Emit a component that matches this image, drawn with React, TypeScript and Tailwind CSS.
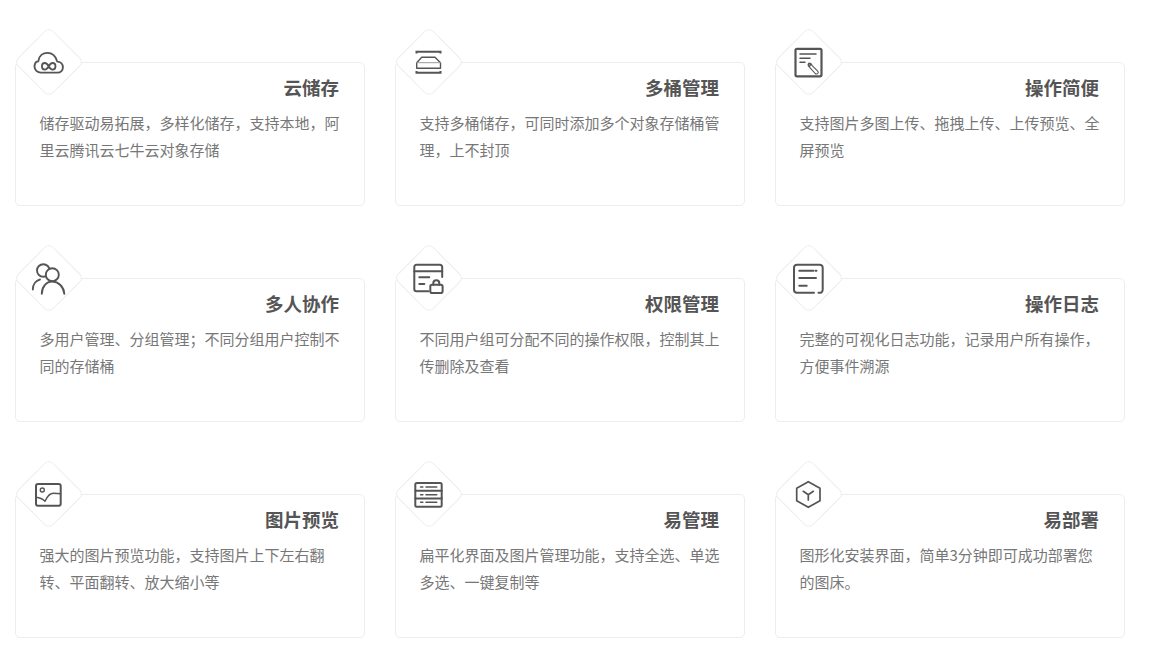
import React from 'react';

const features = [
  {
    title: '云储存',
    desc: '储存驱动易拓展，多样化储存，支持本地，阿里云腾讯云七牛云对象存储',
    icon: (
      <>
        <path d="M10 28.600h16.500c3.200 0 5.400-2.400 5.400-5.400 0-3-2.200-5.300-5-5.600-.5-.1-.8-.3-1-.8-1.400-4.600-4.600-7.900-9.400-7.900-4.700 0-8.300 3.200-9 7.700-.1.500-.3.700-.8.900C4.800 17.300 3.500 20 3.500 22.600c0 3.400 2.900 6 6.500 6z" strokeWidth="1.900" />
        <path d="M17.700 22.300c-1.200-2.200-2.400-3.300-3.800-3.300-1.700 0-3 1.500-3 3.300s1.300 3.300 3 3.300c1.400 0 2.600-1.100 3.800-3.300zm0 0c1.200 2.200 2.400 3.300 3.800 3.300 1.700 0 3-1.500 3-3.300s-1.300-3.300-3-3.300c-1.400 0-2.600 1.100-3.800 3.300z" strokeWidth="1.800" />
      </>
    ),
  },
  {
    title: '多桶管理',
    desc: '支持多桶储存，可同时添加多个对象存储桶管理，上不封顶',
    icon: (
      <>
        <path d="M5.500 9.500V7.700h24v1.800" strokeWidth="2" strokeLinecap="butt" strokeLinejoin="miter" />
        <path d="M5.500 27v1.800h24V27" strokeWidth="2" strokeLinecap="butt" strokeLinejoin="miter" />
        <path d="M5.700 18.700l5-5.400H24l5.500 5.400v5.600H5.700z" strokeWidth="1.400" />
        <path d="M5.700 18.700h23.800" strokeWidth="1" stroke="#999999" />
      </>
    ),
  },
  {
    title: '操作简便',
    desc: '支持图片多图上传、拖拽上传、上传预览、全屏预览',
    icon: (
      <>
        <rect x="4.500" y="4.800" width="26" height="27.500" rx="1.500" strokeWidth="2.200" />
        <path d="M9 10h16M9 14.300h10M9 18.300h5" strokeWidth="1.500" />
        <path d="M17.500 19.500c-.8 1.500-.3 3 1.200 3.800l5.500 6.200c.7.700 2 .7 2.600 0 .6-.7.600-1.700-.1-2.400l-5.800-5.700c-.3-1.500-1.600-2.300-3-2.300l1.600 1.800-.6 1.200-1.400-.6z" strokeWidth="1.100" />
      </>
    ),
  },
  {
    title: '多人协作',
    desc: '多用户管理、分组管理；不同分组用户控制不同的存储桶',
    icon: (
      <>
        <circle cx="12.300" cy="10.500" r="6.300" strokeWidth="1.900" />
        <circle cx="21.300" cy="14.700" r="6.500" strokeWidth="1.900" fill="#ffffff" />
        <path d="M1.800 29.500c0-5 3-9 7.200-10" strokeWidth="1.900" />
        <path d="M10.800 33.800c0-7 4.500-12.300 10.500-12.300s11.500 5.300 12 12.300" strokeWidth="1.900" />
      </>
    ),
  },
  {
    title: '权限管理',
    desc: '不同用户组可分配不同的操作权限，控制其上传删除及查看',
    icon: (
      <>
        <path d="M17.500 31.300H5.500a2.200 2.200 0 0 1-2.200-2.200V7a2.200 2.200 0 0 1 2.200-2.200h23.500A2.200 2.200 0 0 1 31.200 7v10" strokeWidth="2" />
        <path d="M3.300 11.300h27.900M8.300 17.300h10M8.300 24h5" strokeWidth="2" />
        <rect x="19.300" y="24.700" width="12.300" height="8.300" rx="1.800" strokeWidth="2" />
        <path d="M22.300 24.700v-1.500a3 3 0 0 1 6 0v1.500" strokeWidth="2" />
      </>
    ),
  },
  {
    title: '操作日志',
    desc: '完整的可视化日志功能，记录用户所有操作，方便事件溯源',
    icon: (
      <>
        <path d="M23 32.800H6a3 3 0 0 1-3-3V7.700a3 3 0 0 1 3-3h22.700a3 3 0 0 1 3 3v22.100a3 3 0 0 1-3 3h-1.200" strokeWidth="2" />
        <path d="M8.300 10.700h14M24.500 10.700h1M8.300 18h16.700M8.300 25.700h7.400" strokeWidth="2" />
      </>
    ),
  },
  {
    title: '图片预览',
    desc: '强大的图片预览功能，支持图片上下左右翻转、平面翻转、放大缩小等',
    icon: (
      <>
        <rect x="5" y="8" width="24.700" height="21.700" rx="2" strokeWidth="2" />
        <circle cx="11.300" cy="14" r="2" strokeWidth="1.400" />
        <path d="M5 21.300c3.500.3 6.500 1.500 9 4 2-4.500 4.500-8 8.500-8 2.500 0 5 .1 7.200.4" strokeWidth="1.500" />
      </>
    ),
  },
  {
    title: '易管理',
    desc: '扁平化界面及图片管理功能，支持全选、单选多选、一键复制等',
    icon: (
      <>
        <rect x="4.300" y="7" width="26.400" height="23.700" rx="1.500" strokeWidth="2" />
        <path d="M4.300 14.800h26.400M4.300 22.500h26.400" strokeWidth="2" />
        <path d="M9.500 11h2.400M9.500 18.700h2.400M9.500 26.300h2.400" strokeWidth="1.400" />
        <path d="M15 11h10.700M15 18.700h10.700M15 26.300h10.700" strokeWidth="1.600" />
      </>
    ),
  },
  {
    title: '易部署',
    desc: '图形化安装界面，简单3分钟即可成功部署您的图床。',
    icon: (
      <>
        <path d="M17.300 5.700L29 12.300v12.400l-11.700 6.600-11.600-6.600V12.300z" strokeWidth="1.700" />
        <path d="M12.300 15.300l5 3.400 5-3.400M17.300 18.700V24" strokeWidth="1.700" />
      </>
    ),
  },
];

export default function App() {
  return (
    <div className="h-[652px] overflow-hidden bg-white pt-[62px] pl-[15px] font-['Microsoft_YaHei','Noto_Sans_CJK_SC',sans-serif]">
      <div className="grid grid-cols-[350px_350px_350px] gap-x-[30px] gap-y-[72px]">
        {features.map(item => (
          <div key={item.title} className="relative h-[144px] rounded-[5px] border border-[#ebedf0] bg-white pt-[11px] pr-[24px] pl-[23.500px]">
            <div className="absolute -top-[34px] left-0 flex h-[66px] w-[66px] items-center justify-center">
              <div className="absolute h-[50px] w-[50px] rotate-45 rounded-[6px] border border-[#ebedf0] bg-white"></div>
              <svg
                width="36"
                height="36"
                viewBox="0 0 36 36"
                fill="none"
                stroke="#555555"
                strokeLinecap="round"
                strokeLinejoin="round"
                className="relative"
              >
                {item.icon}
              </svg>
            </div>
            <h3 className="pr-[1px] text-right text-[18.500px] leading-[26px] font-bold text-[#555555]">{item.title}</h3>
            <p className="mt-[9px] text-[15px] leading-[27px] text-[#777777]">{item.desc}</p>
          </div>
        ))}
      </div>
    </div>
  );
}
